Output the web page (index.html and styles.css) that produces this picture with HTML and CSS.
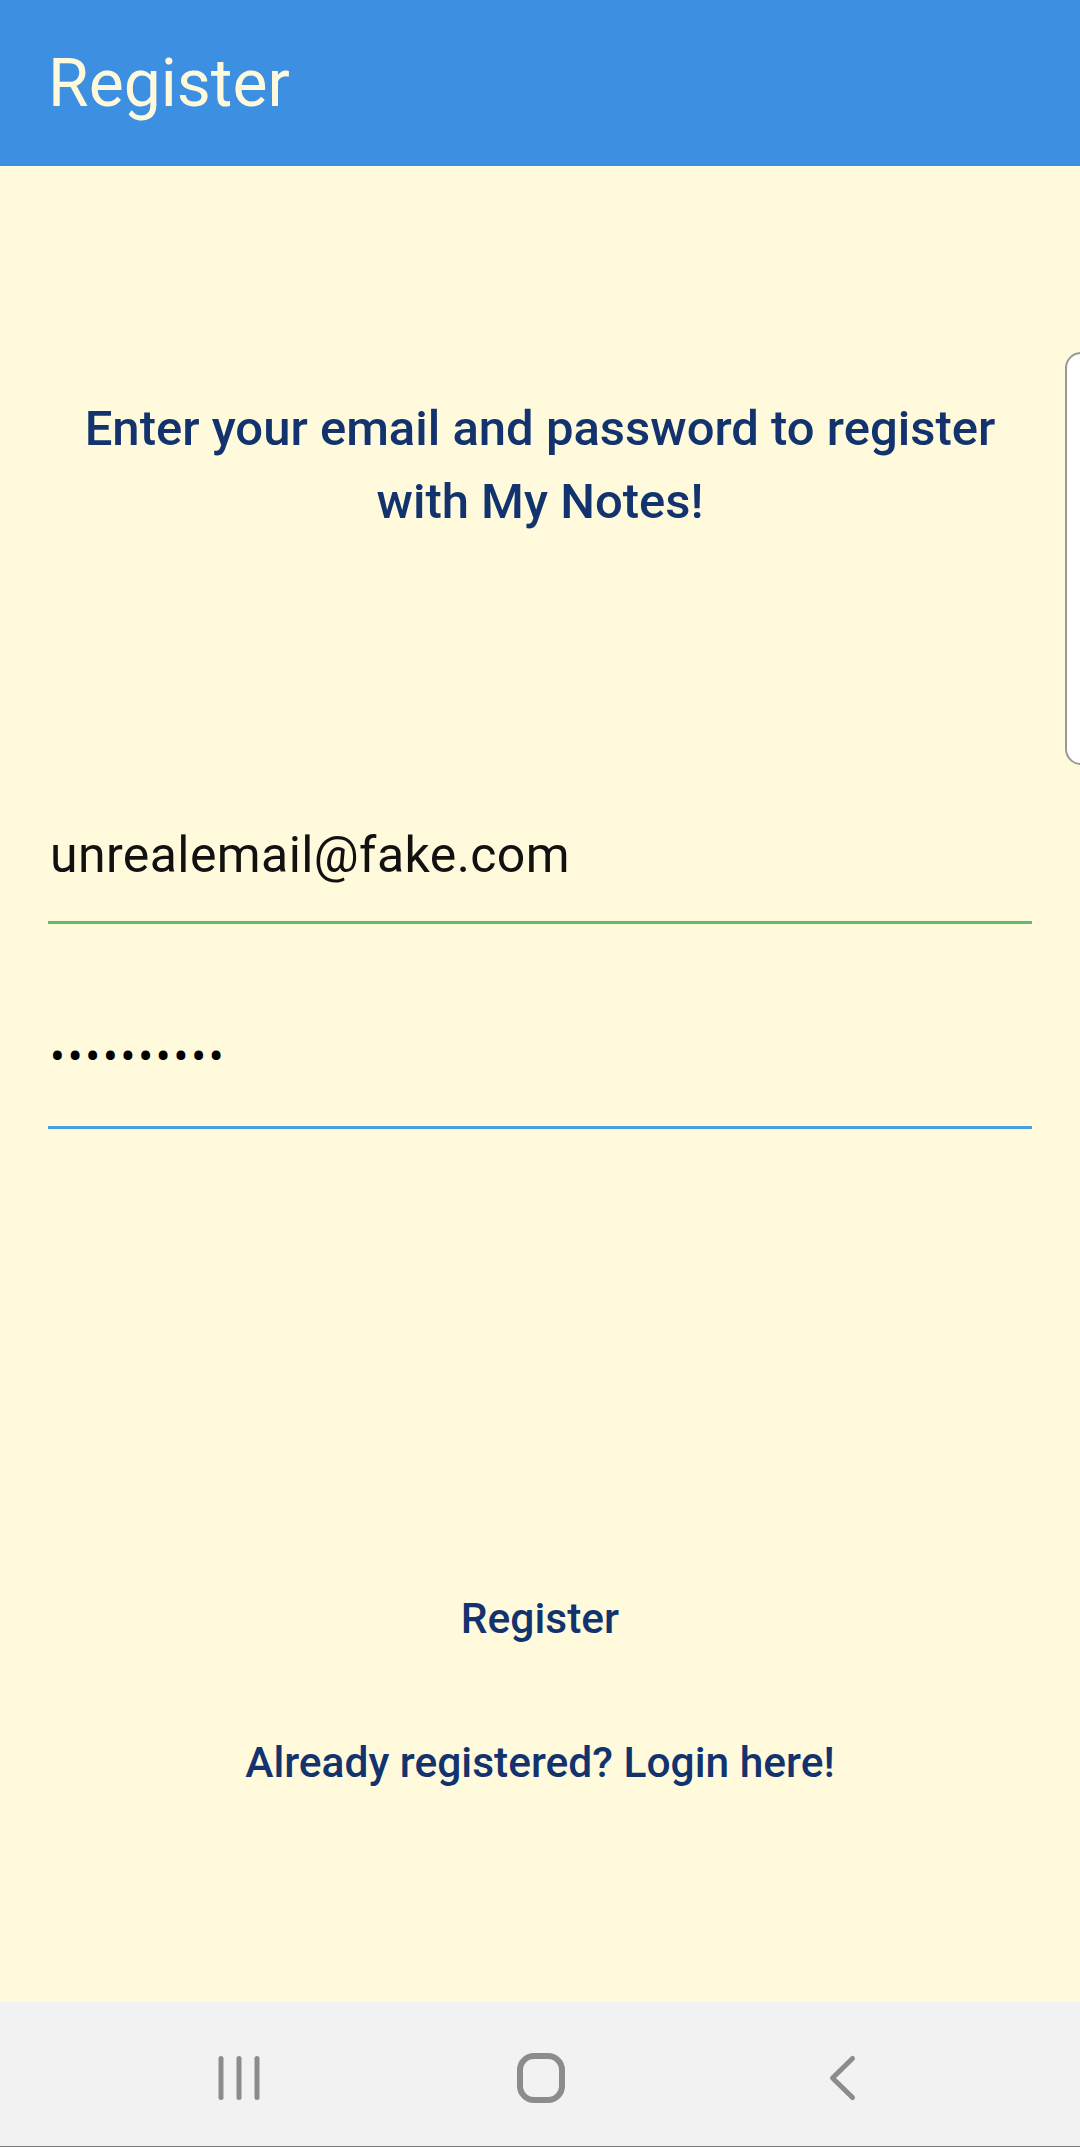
FILE: index.html
```html
<!DOCTYPE html>
<html>
<head>
<meta charset="utf-8">
<link rel="stylesheet" href="styles.css">
</head>
<body>
<div class="screen">
  <header class="appbar"><h1 class="appbar-title">Register</h1></header>
  <main class="content">
    <p class="intro">Enter your email and password to register with My Notes!</p>
    <div class="field field-email"><span class="field-text">unrealemail@fake.com</span></div>
    <div class="field field-password"><span class="field-dots">••••••••••</span></div>
    <div class="btn btn-register">Register</div>
    <div class="btn btn-login">Already registered? Login here!</div>
    <div class="edge-handle"></div>
  </main>
  <nav class="navbar">
    <svg class="nav-icon nav-recents" width="60" height="60" viewBox="0 0 60 60"><g stroke="#8c8c8c" stroke-width="5" stroke-linecap="round"><line x1="12" y1="10.5" x2="12" y2="49.5"/><line x1="30" y1="10.5" x2="30" y2="49.5"/><line x1="48" y1="10.5" x2="48" y2="49.5"/></g></svg>
    <svg class="nav-icon nav-home" width="60" height="60" viewBox="0 0 60 60"><rect x="9" y="8" width="42" height="44" rx="14" fill="none" stroke="#8c8c8c" stroke-width="6"/></svg>
    <svg class="nav-icon nav-back" width="60" height="60" viewBox="0 0 60 60"><polyline points="41.5,10.5 21.5,30 41.5,49.5" fill="none" stroke="#8c8c8c" stroke-width="5" stroke-linecap="round" stroke-linejoin="round"/></svg>
  </nav>
</div>
</body>
</html>
```
FILE: styles.css
```css
html, body {
  margin: 0;
  padding: 0;
}
body {
  width: 1080px;
  height: 2147px;
  overflow: hidden;
  font-family: Roboto, "Noto Sans", sans-serif;
  background: #fffadb;
}
.screen {
  display: flex;
  flex-direction: column;
  height: 2147px;
}
.appbar {
  height: 166px;
  background: #3d8fe2;
  display: flex;
  align-items: center;
  padding-left: 48px;
  flex-shrink: 0;
}
.appbar-title {
  margin: 0;
  font-size: 66px;
  font-weight: 400;
  color: #fff9db;
  line-height: 1;
  padding-top: 2px;
}
.content {
  position: relative;
  height: 1836px;
  flex-shrink: 0;
  padding: 0 48px;
  display: flex;
  flex-direction: column;
}
.intro {
  margin: 226px 20px 0;
  text-align: center;
  font-size: 49px;
  font-weight: 500;
  line-height: 73px;
  color: #12336e;
}
.field {
  border-bottom: 3px solid #66bb6a;
}
.field-email {
  margin-top: 287px;
  padding-bottom: 36px;
}
.field-text {
  display: block;
  font-size: 50px;
  line-height: 60px;
  color: #111;
  letter-spacing: 0.4px;
  padding-left: 2px;
}
.field-password {
  margin-top: 103px;
  padding-bottom: 39px;
  border-bottom-color: #4a9fe0;
}
.field-dots {
  display: block;
  font-size: 44px;
  line-height: 60px;
  color: #000;
  letter-spacing: 2.8px;
  padding-left: 2px;
}
.btn {
  text-align: center;
  font-weight: 500;
  font-size: 42.5px;
  line-height: 60px;
  color: #12336e;
}
.btn-register {
  margin-top: 460px;
}
.btn-login {
  margin-top: 84px;
}
.edge-handle {
  position: absolute;
  left: 1065px;
  top: 186px;
  width: 40px;
  height: 409px;
  background: #fff;
  border: 2px solid #999;
  border-radius: 16px;
}
.navbar {
  flex: 1;
  background: #f2f2f2;
  border-bottom: 1px solid #777;
  display: flex;
  align-items: center;
  padding-top: 8px;
}
.nav-icon {
  display: block;
}
.nav-recents { margin-left: 209px; }
.nav-home { margin-left: 242px; }
.nav-back { margin-left: 240px; }
```
